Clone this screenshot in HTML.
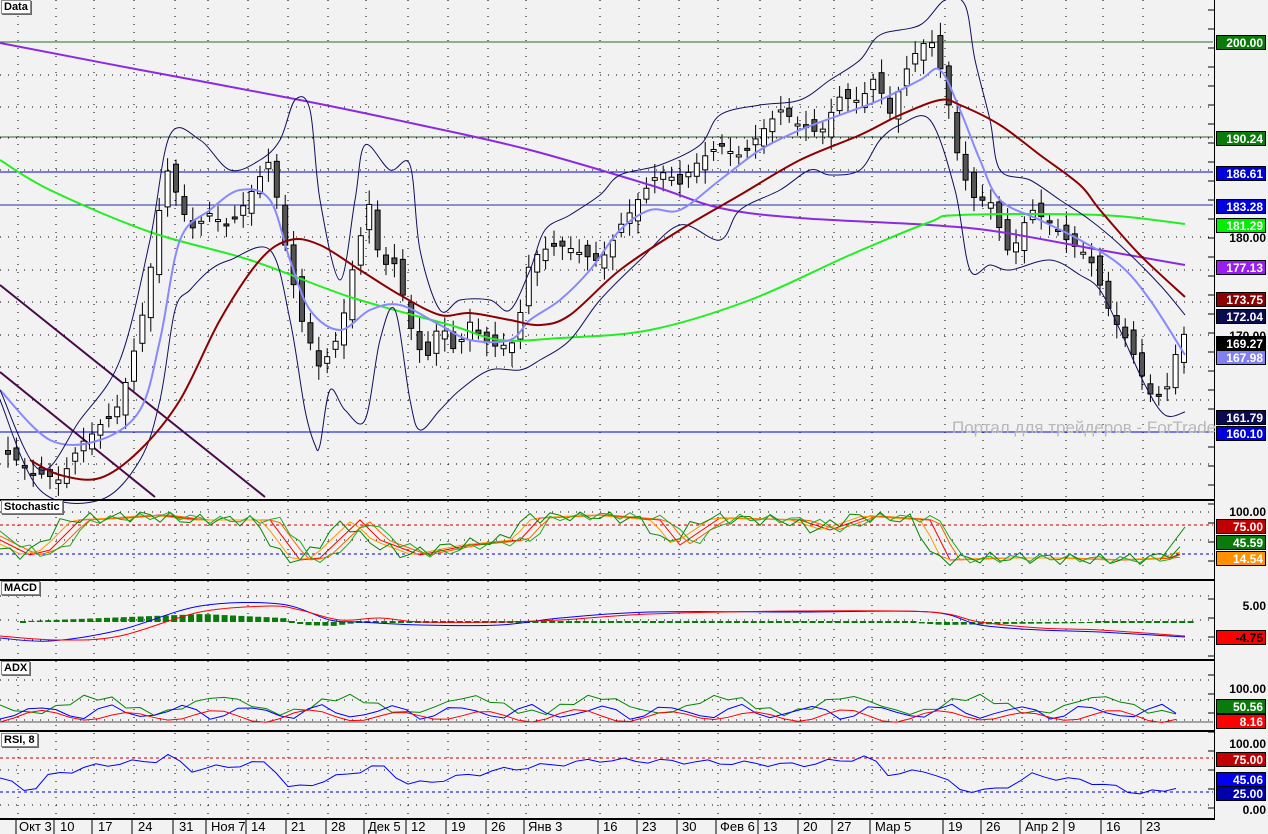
<!DOCTYPE html>
<html><head><meta charset="utf-8"><style>
body{margin:0;background:#f2f2f2;width:1268px;height:834px;overflow:hidden;font-family:"Liberation Sans",sans-serif}
svg{position:absolute;left:0;top:0}
.lb{position:absolute;left:1216px;width:50px;height:15px;font:bold 12px "Liberation Sans",sans-serif;color:#fff;text-align:right;line-height:15px;padding-right:2px;box-sizing:border-box;border:1px solid #000}
.ax{position:absolute;left:1216px;width:50px;font:bold 12px "Liberation Sans",sans-serif;color:#000;text-align:right}
.tt{position:absolute;left:1px;background:#fff;border:1px solid #888;font:bold 11px "Liberation Sans",sans-serif;padding:0 2px;line-height:12px;box-shadow:1px 1px 0 #666}
.dt{position:absolute;top:819px;font:13px "Liberation Sans",sans-serif;color:#000}
</style></head><body>
<svg id="s" width="1268" height="834" xmlns="http://www.w3.org/2000/svg"></svg>
<div class="tt" style="top:0px">Data</div>
<div class="tt" style="top:500px">Stochastic</div>
<div class="tt" style="top:581px">MACD</div>
<div class="tt" style="top:661px">ADX</div>
<div class="tt" style="top:733px">RSI, 8</div>
<div style="position:absolute;left:952px;top:418px;font:17px 'Liberation Sans',sans-serif;color:#b8b8b8;white-space:nowrap">Портал для трейдеров - ForTrader.ru</div>
<div class="lb" style="top:35px;background:#0a7a0a">200.00</div>
<div class="lb" style="top:131px;background:#0a7a0a">190.24</div>
<div class="lb" style="top:166px;background:#0000dd">186.61</div>
<div class="lb" style="top:199px;background:#0000dd">183.28</div>
<div class="lb" style="top:218px;background:#00ee00">181.29</div>
<div class="ax" style="top:231px">180.00</div>
<div class="lb" style="top:260px;background:#9a1cf0">177.13</div>
<div class="lb" style="top:292px;background:#8b0000">173.75</div>
<div class="lb" style="top:309px;background:#0a0a50">172.04</div>
<div class="ax" style="top:329px">170.00</div>
<div class="lb" style="top:336px;background:#000">169.27</div>
<div class="lb" style="top:350px;background:#8080f0">167.98</div>
<div class="lb" style="top:410px;background:#0a0a50">161.79</div>
<div class="lb" style="top:426px;background:#0000dd">160.10</div>
<div class="ax" style="top:505px">100.00</div>
<div class="lb" style="top:519px;background:#c00000">75.00</div>
<div class="lb" style="top:535px;background:#0a7a0a">45.59</div>
<div class="lb" style="top:551px;background:#ff9000">14.54</div>
<div class="ax" style="top:599px">5.00</div>
<div class="lb" style="top:630px;background:#ff0000;color:#000">-4.75</div>
<div class="ax" style="top:682px">100.00</div>
<div class="lb" style="top:699px;background:#0a7a0a">50.56</div>
<div class="lb" style="top:714px;background:#ff0000">8.16</div>
<div class="ax" style="top:737px">100.00</div>
<div class="lb" style="top:752px;background:#c00000">75.00</div>
<div class="lb" style="top:772px;background:#0000ee">45.06</div>
<div class="lb" style="top:786px;background:#0000aa">25.00</div>
<div class="ax" style="top:803px">0.00</div>
<div class="dt" style="left:19px">Окт 3</div><div class="dt" style="left:60px">10</div><div class="dt" style="left:98px">17</div><div class="dt" style="left:138px">24</div><div class="dt" style="left:179px">31</div><div class="dt" style="left:211px">Ноя 7</div><div class="dt" style="left:251px">14</div><div class="dt" style="left:291px">21</div><div class="dt" style="left:331px">28</div><div class="dt" style="left:368px">Дек 5</div><div class="dt" style="left:411px">12</div><div class="dt" style="left:451px">19</div><div class="dt" style="left:491px">26</div><div class="dt" style="left:528px">Янв 3</div><div class="dt" style="left:603px">16</div><div class="dt" style="left:642px">23</div><div class="dt" style="left:682px">30</div><div class="dt" style="left:720px">Фев 6</div><div class="dt" style="left:763px">13</div><div class="dt" style="left:803px">20</div><div class="dt" style="left:837px">27</div><div class="dt" style="left:875px">Мар 5</div><div class="dt" style="left:948px">19</div><div class="dt" style="left:986px">26</div><div class="dt" style="left:1025px">Апр 2</div><div class="dt" style="left:1068px">9</div><div class="dt" style="left:1106px">16</div><div class="dt" style="left:1146px">23</div>
<script>
const s=document.getElementById('s');let h='';
function L(x1,y1,x2,y2,c,w,d){h+=`<line x1="${x1}" y1="${y1}" x2="${x2}" y2="${y2}" stroke="${c}" stroke-width="${w||1}" ${d?`stroke-dasharray="${d}"`:''}/>`}
function P(a,c,w,d){h+=`<polyline fill="none" points="${a.join(' ')}" stroke="${c}" stroke-width="${w||1}" ${d?`stroke-dasharray="${d}"`:''}/>`}
function S(f,c,w){let p=[];for(let i=0;i<f.length;i+=2)p.push([f[i],f[i+1]]);let d='M'+p[0];for(let i=0;i<p.length-1;i++){let a=p[i-1]||p[i],b=p[i],c2=p[i+1],e=p[i+2]||c2;d+=` C${b[0]+(c2[0]-a[0])/6},${b[1]+(c2[1]-a[1])/6} ${c2[0]-(e[0]-b[0])/6},${c2[1]-(e[1]-b[1])/6} ${c2[0]},${c2[1]}`}h+=`<path d="${d}" fill="none" stroke="${c}" stroke-width="${w||1}"/>`}
function pts(f){let r=[];for(let i=0;i<f.length;i+=2)r.push(f[i]+','+f[i+1]);return r}
function interp(a,x){for(let i=0;i<a.length-2;i+=2){if(x<=a[i+2]){let t=(x-a[i])/(a[i+2]-a[i]);return a[i+1]+t*(a[i+3]-a[i+1])}}return a[a.length-1]}
const wk=[18,56,94,134,175,208,248,288,328,366,408,448,488,526,600,639,679,718,760,800,834,872,945,983,1022,1066,1103,1143];
[[0,498],[501,578],[581,658],[661,729],[733,818]].forEach(p=>{wk.forEach(x=>L(x,p[0],x,p[1],'#000',1,'1,7'));});
[75,107,138,170,237,270,302,335,367,400,464,512,540,596,620,640,680,700,720,770,805].forEach(y=>L(0,y,1213,y,'#000',1,'1,7'));
L(0,42,1213,42,'#2a6a2a');L(0,137,1213,137,'#3a5a3a');L(0,172,1213,172,'#0000dd');L(0,205,1213,205,'#2030a0');L(0,432,1213,432,'#0000dd');
L(0,285,265,497,'#4a0a4a',2);L(0,372,155,497,'#4a0a4a',2);
const C=[0,455,30,490,60,480,80,430,100,410,120,400,140,340,155,260,165,180,175,200,190,230,210,200,230,210,250,190,270,170,285,260,300,330,320,370,340,320,355,240,370,190,380,260,395,270,410,340,425,380,440,330,455,350,470,310,490,330,515,340,530,270,560,260,600,250,620,210,640,190,660,180,680,200,700,170,720,140,740,140,760,120,780,110,800,140,820,150,840,100,860,90,875,60,890,100,910,60,930,50,945,100,960,180,975,200,990,190,1010,240,1030,200,1050,230,1070,260,1090,270,1110,310,1130,330,1150,380,1165,390,1178,350,1185,342];
let prev=interp(C,0);
for(let x=8;x<=1186;x+=8.4){let c=interp(C,x)+Math.sin(x*0.7)*16;let o=prev+Math.cos(x*1.3)*8;let t=Math.min(o,c)-4-Math.abs(Math.sin(x))*10,b=Math.max(o,c)+4+Math.abs(Math.cos(x*2))*10;
L(x,t,x,b,'#000');let up=c<o;h+=`<rect x="${x-2.5}" y="${Math.min(o,c)}" width="5" height="${Math.max(2,Math.abs(o-c))}" fill="${up?'#fff':'#555'}" stroke="#000" stroke-width="1"/>`;prev=c;}
S([0,43,130,68,300,100,420,125,530,150,650,185,720,208,800,218,930,225,1000,232,1100,250,1185,265],'#8a2be2',2);
S([0,160,50,190,150,232,250,260,350,297,450,325,500,340,560,338,650,330,750,300,850,255,930,222,960,215,1100,215,1185,224],'#22ee22',2);
S([0,390,50,440,100,440,140,410,160,340,180,240,210,210,240,190,270,200,290,260,310,310,340,330,370,310,400,305,440,325,470,340,510,340,530,320,560,300,590,270,620,230,650,210,680,210,720,180,760,150,800,130,840,115,880,100,920,80,940,70,960,110,980,160,1000,200,1040,220,1080,240,1120,265,1150,300,1185,355],'#8888ff',2);
S([0,390,40,470,80,420,120,360,150,240,170,135,200,140,230,170,260,160,280,140,295,100,310,110,320,200,340,280,355,200,365,145,390,170,410,165,420,250,440,310,460,300,490,300,510,310,530,270,545,230,570,215,600,195,620,175,660,165,700,145,720,115,760,105,800,100,830,80,860,60,880,35,920,25,945,0,965,5,975,60,990,120,1000,170,1030,180,1060,200,1090,220,1120,245,1160,285,1185,315],'#101060',1);
S([0,400,40,490,100,500,140,460,160,400,175,310,190,290,210,270,230,260,270,250,290,320,305,410,315,445,320,445,330,390,345,410,365,420,380,340,395,310,410,400,420,430,440,410,460,390,490,370,520,370,540,360,570,340,600,300,640,260,680,225,720,240,740,210,780,190,810,170,830,175,860,170,880,140,900,125,930,120,955,190,970,270,990,265,1010,270,1050,260,1080,275,1100,290,1120,330,1145,385,1165,415,1185,412],'#101060',1);
S([30,460,60,475,100,478,140,450,180,400,220,320,260,260,290,240,320,245,360,270,400,295,440,315,470,313,510,320,540,325,570,315,620,270,680,230,740,195,800,160,860,135,900,115,940,100,960,105,1000,125,1040,155,1080,185,1100,210,1140,255,1185,297],'#8b0000',2);
L(0,525,1213,525,'#c00',1,'3,3');L(0,554,1213,554,'#00c',1,'3,3');
const st=[0,540,30,555,50,550,80,520,120,518,160,515,200,520,270,520,300,560,320,558,360,520,380,540,420,555,470,545,520,540,540,518,600,515,660,520,680,545,720,518,800,520,830,530,870,516,930,520,950,560,1000,558,1060,558,1120,560,1170,558,1185,552];
[['#ff0000',0,0],['#ff6000',4,0],['#ff9900',-4,0],['#008800',-8,6],['#22aa22',6,4]].forEach((c,k)=>{let a=[];for(let x=0;x<=1185;x+=10){let y=interp(st,x-c[1]*2)+Math.sin(x*0.23+k)*c[2];a.push(x+','+Math.max(512,Math.min(566,y)))}P(a,c[0],1)});
P(['1160,560','1185,527'],'#008800');
for(let x=20;x<1190;x+=8.4){let v=interp([0,0,150,-6,200,-8,280,-4,300,3,330,4,360,0,600,-1,900,0,940,3,1000,2,1185,0],x);if(Math.abs(v)<1)h+=`<rect x="${x}" y="621" width="6" height="2" fill="#0a7a0a"/>`;else h+=`<rect x="${x}" y="${Math.min(622,622+v)}" width="6" height="${Math.abs(v)}" fill="#0a7a0a"/>`}
S([0,638,50,641,120,630,200,606,280,604,330,620,360,622,420,625,500,625,560,618,650,612,800,612,930,612,980,625,1040,630,1100,632,1185,637],'#0000ff',1);
S([0,636,60,640,120,636,200,612,270,606,300,610,340,620,380,618,420,622,500,622,560,620,650,614,800,611,930,612,980,622,1040,628,1100,630,1185,636],'#ff0000',1);
L(0,722,1213,722,'#555');
let ag=[],ab=[],ar=[];for(let x=0;x<=1185;x+=14){ag.push(x+','+(705+Math.sin(x*0.05)*8+Math.sin(x*0.21)*3));ab.push(x+','+(712+Math.sin(x*0.09+1)*6+Math.cos(x*0.3)*2));ar.push(x+','+(716+Math.sin(x*0.07+2)*5+Math.cos(x*0.4)*1.5))}
P(ag,'#008800');P(ab,'#0000ff');P(ar,'#ff0000');
L(0,758,1213,758,'#c00',1,'3,3');L(0,792,1213,792,'#00c',1,'3,3');
let rs=[0,778,30,792,50,775,100,765,160,760,170,755,190,770,270,762,290,790,380,765,410,785,500,770,600,760,700,762,800,765,870,757,890,775,930,770,960,790,1000,790,1030,775,1100,783,1130,792,1170,792,1185,777];
let ra=[];for(let x=0;x<=1185;x+=12)ra.push(x+','+(interp(rs,x)+Math.sin(x*0.37)*2.5));P(ra,'#0000ff');
[500,580,660,731,819].forEach(y=>L(0,y,1215,y,'#000',2));
L(1214.5,0,1214.5,819,'#000',1);
for(let y=10;y<819;y+=19)L(1208,y,1214,y,'#000');
wk.forEach(x=>L(x-2,819,x-2,834,'#000'));
s.innerHTML=h;
</script>
</body></html>
